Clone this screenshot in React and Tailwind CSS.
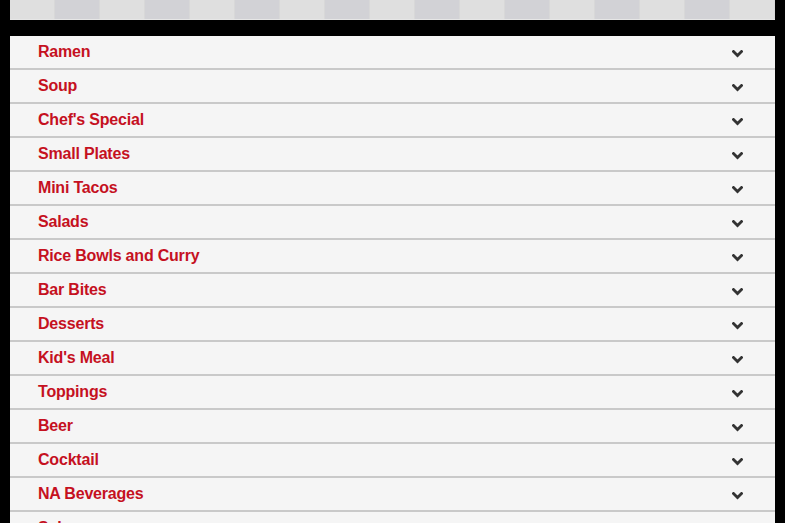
const CATEGORIES = [
  "Ramen",
  "Soup",
  "Chef's Special",
  "Small Plates",
  "Mini Tacos",
  "Salads",
  "Rice Bowls and Curry",
  "Bar Bites",
  "Desserts",
  "Kid's Meal",
  "Toppings",
  "Beer",
  "Cocktail",
  "NA Beverages",
  "Sake",
];

const TABS = Array.from({ length: 17 }, (_, i) => i);

const Chevron = () => (
  <svg width="11" height="8" viewBox="0 0 11 8" className="mt-[3px] block">
    <polyline
      points="1.5,1.5 5.5,5.5 9.5,1.5"
      fill="none"
      stroke="#333333"
      strokeWidth="2.8"
      strokeLinecap="square"
    />
  </svg>
);

const AccordionRow = ({ label }) => (
  <div className="flex h-[34px] items-center justify-between border-b-2 border-[#c9c9c9] bg-[#f5f5f5] pl-[28px] pr-[32px]">
    <span className="text-[16px] font-bold tracking-[-0.2px] text-[#c5111f]">
      {label}
    </span>
    <Chevron />
  </div>
);

export default function App() {
  return (
    <div
      className="h-[523px] overflow-hidden bg-black px-[10px]"
      style={{ fontFamily: '"Liberation Sans", Arial, sans-serif' }}
    >
      {/* tab strip */}
      <div className="flex h-[20px] border-b border-[#e6e6e6]">
        {TABS.map((i) => (
          <div
            key={i}
            className={`flex-1 border-r border-[#d8d8d8] ${
              i % 2 === 0 ? "bg-[#dfdfdf]" : "bg-[#d2d2d6]"
            }`}
          />
        ))}
      </div>

      {/* menu categories */}
      <div className="mt-[16px] flex flex-col">
        {CATEGORIES.map((c) => (
          <AccordionRow key={c} label={c} />
        ))}
      </div>
    </div>
  );
}
